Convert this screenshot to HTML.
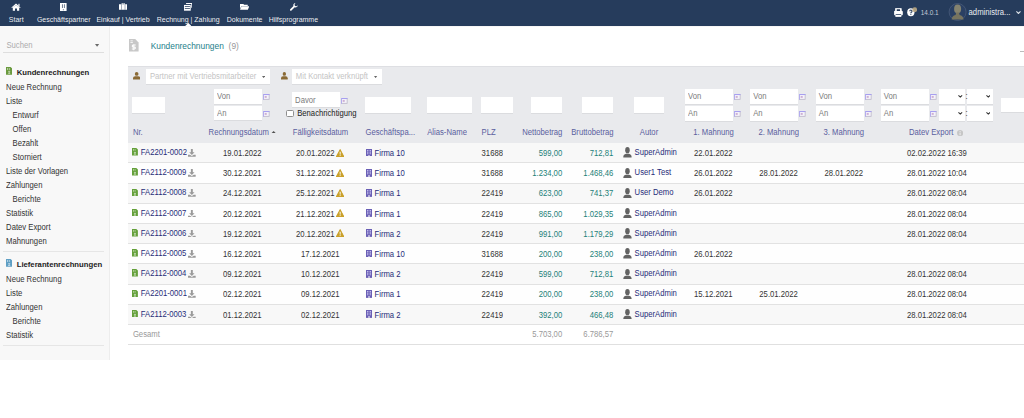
<!DOCTYPE html>
<html><head><meta charset="utf-8"><title>Kundenrechnungen</title>
<style>
html,body{margin:0;padding:0;}
body{width:1024px;height:418px;overflow:hidden;position:relative;background:#fff;font-family:"Liberation Sans",sans-serif;font-size:7.7px;color:#333;}
.t{position:absolute;line-height:0;white-space:nowrap;}
.r{position:absolute;display:block;}
</style></head><body>
<div class="r" style="left:0.00px;top:0.00px;width:1024.00px;height:26.00px;background:#263c5c"></div>
<div class="r" style="left:109.00px;top:26.00px;width:915.00px;height:1.00px;background:rgba(0,0,0,0.035)"></div>
<div class="t" style="left:-133.75px;width:300px;text-align:center;top:20.37px;font-size:7px;color:rgba(255,255,255,0.93);transform:scaleY(1.12);transform-origin:0 2.43px;">Start</div>
<div class="t" style="left:-86.25px;width:300px;text-align:center;top:20.37px;font-size:7px;color:rgba(255,255,255,0.93);transform:scaleY(1.12);transform-origin:0 2.43px;">Geschäftspartner</div>
<div class="t" style="left:-27.00px;width:300px;text-align:center;top:20.37px;font-size:7px;color:rgba(255,255,255,0.93);transform:scaleY(1.12);transform-origin:0 2.43px;">Einkauf | Vertrieb</div>
<div class="t" style="left:38.20px;width:300px;text-align:center;top:20.37px;font-size:7px;color:rgba(255,255,255,0.93);transform:scaleY(1.12);transform-origin:0 2.43px;">Rechnung | Zahlung</div>
<div class="t" style="left:94.60px;width:300px;text-align:center;top:20.37px;font-size:7px;color:rgba(255,255,255,0.93);transform:scaleY(1.12);transform-origin:0 2.43px;">Dokumente</div>
<div class="t" style="left:143.40px;width:300px;text-align:center;top:20.37px;font-size:7px;color:rgba(255,255,255,0.93);transform:scaleY(1.12);transform-origin:0 2.43px;">Hilfsprogramme</div>
<svg class="r" style="left:11.00px;top:2.50px;width:10.00px;height:8.00px;" viewBox="0 0 10 8" preserveAspectRatio="none"><path fill="#fff" d="M5 0.6 L9.6 4.4 L9 5.1 L5 1.9 L1 5.1 L0.4 4.4 Z M1.8 4.6 L5 2.2 L8.2 4.6 V7.8 H6 V5.6 H4 V7.8 H1.8 Z"/><rect fill="#fff" x="7.4" y="0.8" width="1.1" height="2.2"/></svg>
<svg class="r" style="left:60.30px;top:2.70px;width:6.60px;height:8.20px;" viewBox="0 0 7 8" preserveAspectRatio="none"><path fill="#fff" d="M0 0 H7 V8 H0 Z"/><path fill="#263c5c" d="M2.1 1.3 H2.8 V4.8 H2.1 Z M4.2 1.3 H4.9 V4.8 H4.2 Z M3.1 6 H3.9 V7 H3.1 Z"/></svg>
<svg class="r" style="left:119.00px;top:3.40px;width:8.30px;height:6.80px;" viewBox="0 0 8 7" preserveAspectRatio="none"><path fill="#fff" d="M2.6 0 H5.4 V1.3 H8 V7 H0 V1.3 H2.6 Z"/><path fill="#263c5c" d="M3.2 0.5 H4.8 V1.3 H3.2 Z M2 1.3 H2.4 V7 H2 Z M5.6 1.3 H6 V7 H5.6 Z"/></svg>
<svg class="r" style="left:183.90px;top:3.20px;width:8.30px;height:7.70px;" viewBox="0 0 8 8" preserveAspectRatio="none"><path fill="#fff" d="M2 0 H8 V5 H7 V1 H2 Z"/><path fill="#fff" d="M0 2 H6.5 V8 H0 Z"/><path fill="#263c5c" d="M0.8 3.5 H5.7 V4.1 H0.8 Z M0.8 5.3 H5.7 V5.9 H0.8 Z"/></svg>
<svg class="r" style="left:240.00px;top:3.90px;width:9.30px;height:5.80px;" viewBox="0 0 9 6" preserveAspectRatio="none"><path fill="#fff" d="M0 0 H3.2 L4 0.8 H7.5 V2 H1.5 L0 5 Z M1.6 2.4 H9 L7.6 6 H0 Z"/></svg>
<svg class="r" style="left:289.70px;top:3.20px;width:7.90px;height:7.70px;" viewBox="0 0 8 8" preserveAspectRatio="none"><path fill="#fff" d="M5.6 0 A2.4 2.4 0 0 0 3.5 3.2 L0.2 6.5 A0.9 0.9 0 0 0 1.5 7.8 L4.8 4.5 A2.4 2.4 0 0 0 8 2.4 L6.8 3.4 L5 3 L4.6 1.2 L5.6 0 Z"/></svg>
<svg class="r" style="left:184.80px;top:23.00px;width:6.70px;height:3.20px;" viewBox="0 0 6 3" preserveAspectRatio="none"><path fill="#fff" d="M3 0 L6 3 H0 Z"/></svg>
<svg class="r" style="left:894.00px;top:7.80px;width:8.80px;height:9.00px;" viewBox="0 0 9 9" preserveAspectRatio="none"><path fill="#fff" stroke="#fff" stroke-width="0.8" stroke-linejoin="round" d="M1.6 0.4 H7.4 V2.8 Q8.6 2.8 8.6 4 V6.8 H7.2 V8.6 H1.8 V6.8 H0.4 V4 Q0.4 2.8 1.6 2.8 Z"/><path fill="#263c5c" d="M2.8 1.2 H6.2 V2.9 H2.8 Z M1.8 5.9 H7.2 V6.8 H1.8 Z"/></svg>
<svg class="r" style="left:906.90px;top:8.30px;width:7.70px;height:8.40px;" viewBox="0 0 8 8" preserveAspectRatio="none"><circle cx="4" cy="4" r="3.8" fill="#fff"/><path fill="none" stroke="#263c5c" stroke-width="1.1" d="M2.9 3.1 A1.15 1.15 0 1 1 4.3 4.2 Q4 4.4 4 5"/><rect fill="#263c5c" x="3.5" y="5.6" width="1" height="1"/></svg>
<svg class="r" style="left:911.60px;top:6.80px;width:5.40px;height:5.40px;" viewBox="0 0 6 6" preserveAspectRatio="none"><circle cx="3" cy="3" r="2.7" fill="#bba984" fill-opacity="0.9"/></svg>
<div class="t" style="left:920.80px;top:12.98px;font-size:6.4px;color:#c2cad6;transform:scaleY(1.12);transform-origin:0 2.22px;">14.0.1</div>
<svg class="r" style="left:944.00px;top:0.00px;width:28.00px;height:24.00px;" viewBox="0 0 28 24" preserveAspectRatio="none"><circle cx="13.6" cy="12" r="8.5" fill="#2a4063" stroke="#4d5f7e" stroke-width="0.7"/><ellipse cx="13.6" cy="8.9" rx="3.5" ry="4.3" fill="#85836f"/><path fill="#77745f" d="M7.6 19.6 Q8 15.6 11.6 15 L12.2 12.6 H15 L15.6 15 Q19.2 15.6 19.6 19.6 Z"/></svg>
<div class="t" style="left:968.60px;top:13.03px;color:#e9edf2;transform:scaleY(1.12);transform-origin:0 2.67px;">administra...</div>
<svg class="r" style="left:1015.70px;top:11.00px;width:4.90px;height:3.00px;" viewBox="0 0 5 3" preserveAspectRatio="none"><path fill="none" stroke="#dfe4ea" stroke-width="1.1" d="M0.4 0.4 L2.5 2.5 L4.6 0.4"/></svg>
<div class="r" style="left:0.00px;top:26.00px;width:109.00px;height:334.00px;background:#f8f8f8;border-right:1px solid #ededed"></div>
<div class="t" style="left:6.40px;top:46.43px;color:#acacac;transform:scaleY(1.12);transform-origin:0 2.67px;">Suchen</div>
<svg class="r" style="left:95.40px;top:44.30px;width:4.20px;height:2.80px;" viewBox="0 0 4 3" preserveAspectRatio="none"><path fill="#6a6a6a" d="M0 0 H4 L2 3 Z"/></svg>
<div class="r" style="left:2.70px;top:52.00px;width:100.90px;height:1.00px;background:#dedede"></div>
<svg class="r" style="left:5.70px;top:67.40px;width:6.30px;height:7.70px;" viewBox="0 0 6 8" preserveAspectRatio="none"><path fill="#6a9a3e" d="M0 0 H4.4 L6 1.6 V8 H0 Z"/><path fill="#fff" fill-opacity="0.6" d="M1.1 1.0 H1.9 V3.0 H1.1 Z M2.7 1.0 H3.5 V3.0 H2.7 Z M2.5 4.0 H3.5 V7.3 H2.5 Z M1.9 4.6 H4.1 V5.2 H1.9 Z M1.9 6.2 H4.1 V6.8 H1.9Z"/></svg>
<div class="t" style="left:16.70px;top:73.23px;color:#222;font-weight:bold;transform:scaleY(1.02);transform-origin:0 2.67px;">Kundenrechnungen</div>
<div class="t" style="left:6.10px;top:88.13px;color:#333;transform:scaleY(1.12);transform-origin:0 2.67px;">Neue Rechnung</div>
<div class="t" style="left:6.10px;top:102.13px;color:#333;transform:scaleY(1.12);transform-origin:0 2.67px;">Liste</div>
<div class="t" style="left:12.60px;top:116.13px;color:#333;transform:scaleY(1.12);transform-origin:0 2.67px;">Entwurf</div>
<div class="t" style="left:12.60px;top:130.13px;color:#333;transform:scaleY(1.12);transform-origin:0 2.67px;">Offen</div>
<div class="t" style="left:12.60px;top:144.13px;color:#333;transform:scaleY(1.12);transform-origin:0 2.67px;">Bezahlt</div>
<div class="t" style="left:12.60px;top:158.13px;color:#333;transform:scaleY(1.12);transform-origin:0 2.67px;">Storniert</div>
<div class="t" style="left:6.10px;top:172.13px;color:#333;transform:scaleY(1.12);transform-origin:0 2.67px;">Liste der Vorlagen</div>
<div class="t" style="left:6.10px;top:186.13px;color:#333;transform:scaleY(1.12);transform-origin:0 2.67px;">Zahlungen</div>
<div class="t" style="left:12.60px;top:200.13px;color:#333;transform:scaleY(1.12);transform-origin:0 2.67px;">Berichte</div>
<div class="t" style="left:6.10px;top:214.13px;color:#333;transform:scaleY(1.12);transform-origin:0 2.67px;">Statistik</div>
<div class="t" style="left:6.10px;top:228.13px;color:#333;transform:scaleY(1.12);transform-origin:0 2.67px;">Datev Export</div>
<div class="t" style="left:6.10px;top:242.13px;color:#333;transform:scaleY(1.12);transform-origin:0 2.67px;">Mahnungen</div>
<div class="r" style="left:2.70px;top:251.00px;width:100.90px;height:1.00px;background:#e6e6e6"></div>
<svg class="r" style="left:5.70px;top:259.20px;width:6.30px;height:7.80px;" viewBox="0 0 6 8" preserveAspectRatio="none"><path fill="#5f9fc4" d="M0 0 H4.4 L6 1.6 V8 H0 Z"/><path fill="#fff" fill-opacity="0.6" d="M1.1 1.0 H1.9 V3.0 H1.1 Z M2.7 1.0 H3.5 V3.0 H2.7 Z M2.5 4.0 H3.5 V7.3 H2.5 Z M1.9 4.6 H4.1 V5.2 H1.9 Z M1.9 6.2 H4.1 V6.8 H1.9Z"/></svg>
<div class="t" style="left:16.70px;top:265.13px;color:#222;font-weight:bold;transform:scaleY(1.02);transform-origin:0 2.67px;">Lieferantenrechnungen</div>
<div class="t" style="left:6.10px;top:280.33px;color:#333;transform:scaleY(1.12);transform-origin:0 2.67px;">Neue Rechnung</div>
<div class="t" style="left:6.10px;top:294.33px;color:#333;transform:scaleY(1.12);transform-origin:0 2.67px;">Liste</div>
<div class="t" style="left:6.10px;top:308.33px;color:#333;transform:scaleY(1.12);transform-origin:0 2.67px;">Zahlungen</div>
<div class="t" style="left:12.60px;top:322.33px;color:#333;transform:scaleY(1.12);transform-origin:0 2.67px;">Berichte</div>
<div class="t" style="left:6.10px;top:336.33px;color:#333;transform:scaleY(1.12);transform-origin:0 2.67px;">Statistik</div>
<div class="r" style="left:2.70px;top:345.00px;width:100.90px;height:1.00px;background:#e6e6e6"></div>
<svg class="r" style="left:129.00px;top:39.00px;width:9.60px;height:12.60px;" viewBox="0 0 10 13" preserveAspectRatio="none"><path fill="#c8c8c8" d="M0 0 H6.5 L10 3.5 V13 H0 Z"/><path fill="#fff" d="M1.5 1.5 H4 V2.4 H1.5 Z M1.5 3.3 H4 V4.2 H1.5 Z M4.5 5.5 H5.5 V11.5 H4.5 Z M3 6.8 A1.4 1.2 0 0 1 4.4 5.8 H7 V6.8 H4.4 A0.4 0.4 0 0 0 4.4 7.8 H5.6 A1.6 1.5 0 0 1 5.6 10.8 H3 V9.8 H5.6 A0.5 0.5 0 0 0 5.6 8.8 H4.4 A1.4 1.4 0 0 1 3 6.8Z"/></svg>
<div class="t" style="left:150.70px;top:46.29px;font-size:8.4px;color:rgb(30,126,138);transform:scaleY(1.18);transform-origin:0 2.91px;">Kundenrechnungen</div>
<div class="t" style="left:228.60px;top:46.29px;font-size:8.4px;color:#999;transform:scaleY(1.18);transform-origin:0 2.91px;">(9)</div>
<div class="r" style="left:1020.00px;top:50.80px;width:4.00px;height:1.00px;background:#bbb"></div>
<div class="r" style="left:128.30px;top:66.00px;width:895.70px;height:76.60px;background:rgb(233,234,237)"></div>
<div class="r" style="left:128.30px;top:66.00px;width:895.70px;height:1.00px;background:rgb(222,223,227)"></div>
<svg class="r" style="left:132.60px;top:72.30px;width:7.30px;height:7.60px;" viewBox="0 0 8 8" preserveAspectRatio="none"><circle cx="4" cy="2" r="2" fill="#8a6a35"/><path fill="#8a6a35" d="M0 8 V6.6 Q0 4.6 2.4 4.6 H5.6 Q8 4.6 8 6.6 V8 Z"/></svg>
<div class="r" style="left:145.70px;top:69.00px;width:124.00px;height:15.00px;background:#fff;box-shadow:0 1px 0 rgba(0,0,0,0.06)"></div>
<div class="t" style="left:149.90px;top:77.43px;color:#c4c4c4;transform:scaleY(1.12);transform-origin:0 2.67px;">Partner mit Vertriebsmitarbeiter</div>
<svg class="r" style="left:262.20px;top:75.50px;width:3.20px;height:2.10px;" viewBox="0 0 4 3" preserveAspectRatio="none"><path fill="#666" d="M0 0 H4 L2 3 Z"/></svg>
<svg class="r" style="left:281.40px;top:72.30px;width:6.70px;height:7.60px;" viewBox="0 0 8 8" preserveAspectRatio="none"><circle cx="4" cy="2" r="2" fill="#8a6a35"/><path fill="#8a6a35" d="M0 8 V6.6 Q0 4.6 2.4 4.6 H5.6 Q8 4.6 8 6.6 V8 Z"/></svg>
<div class="r" style="left:292.30px;top:69.00px;width:89.60px;height:15.00px;background:#fff;box-shadow:0 1px 0 rgba(0,0,0,0.06)"></div>
<div class="t" style="left:295.80px;top:77.43px;color:#c4c4c4;transform:scaleY(1.12);transform-origin:0 2.67px;">Mit Kontakt verknüpft</div>
<svg class="r" style="left:374.40px;top:75.50px;width:3.20px;height:2.10px;" viewBox="0 0 4 3" preserveAspectRatio="none"><path fill="#666" d="M0 0 H4 L2 3 Z"/></svg>
<div class="r" style="left:132.20px;top:96.90px;width:32.60px;height:15.80px;background:#fff;box-shadow:0 1px 0 rgba(0,0,0,0.06)"></div>
<div class="r" style="left:214.10px;top:88.80px;width:47.90px;height:15.30px;background:#fff;box-shadow:0 1px 0 rgba(0,0,0,0.06)"></div>
<div class="t" style="left:217.00px;top:97.03px;color:#7c7c7c;transform:scaleY(1.12);transform-origin:0 2.67px;">Von</div>
<div class="r" style="left:214.10px;top:105.80px;width:47.90px;height:14.60px;background:#fff;box-shadow:0 1px 0 rgba(0,0,0,0.06)"></div>
<div class="t" style="left:217.00px;top:113.83px;color:#7c7c7c;transform:scaleY(1.12);transform-origin:0 2.67px;">An</div>
<svg class="r" style="left:263.20px;top:94.00px;width:6.50px;height:5.70px;" viewBox="0 0 7 6" preserveAspectRatio="none"><rect x="0.4" y="0.4" width="6.2" height="5.2" fill="#f5f3fa" stroke="#b7b3c6" stroke-width="0.8"/><rect x="0" y="0" width="7" height="1.1" fill="#a79ff0"/><rect x="0" y="0" width="1" height="6" fill="#b2aaf0"/><rect x="1.8" y="2.2" width="2.2" height="1.8" fill="#c9a9d0"/></svg>
<svg class="r" style="left:263.20px;top:111.30px;width:6.50px;height:5.70px;" viewBox="0 0 7 6" preserveAspectRatio="none"><rect x="0.4" y="0.4" width="6.2" height="5.2" fill="#f5f3fa" stroke="#b7b3c6" stroke-width="0.8"/><rect x="0" y="0" width="7" height="1.1" fill="#a79ff0"/><rect x="0" y="0" width="1" height="6" fill="#b2aaf0"/><rect x="1.8" y="2.2" width="2.2" height="1.8" fill="#c9a9d0"/></svg>
<div class="r" style="left:292.00px;top:92.40px;width:47.80px;height:15.00px;background:#fff;box-shadow:0 1px 0 rgba(0,0,0,0.06)"></div>
<div class="t" style="left:295.10px;top:100.93px;color:#7c7c7c;transform:scaleY(1.12);transform-origin:0 2.67px;">Davor</div>
<svg class="r" style="left:341.20px;top:97.90px;width:6.50px;height:5.70px;" viewBox="0 0 7 6" preserveAspectRatio="none"><rect x="0.4" y="0.4" width="6.2" height="5.2" fill="#f5f3fa" stroke="#b7b3c6" stroke-width="0.8"/><rect x="0" y="0" width="7" height="1.1" fill="#a79ff0"/><rect x="0" y="0" width="1" height="6" fill="#b2aaf0"/><rect x="1.8" y="2.2" width="2.2" height="1.8" fill="#c9a9d0"/></svg>
<div class="r" style="left:286.10px;top:110.10px;width:7.50px;height:7.30px;background:#fff;border:0.9px solid #8f8f8f;border-radius:1.5px;box-sizing:border-box"></div>
<div class="t" style="left:297.20px;top:114.33px;color:#222;transform:scaleY(1.12);transform-origin:0 2.67px;">Benachrichtigung</div>
<div class="r" style="left:365.00px;top:97.20px;width:45.80px;height:15.60px;background:#fff;box-shadow:0 1px 0 rgba(0,0,0,0.06)"></div>
<div class="r" style="left:427.20px;top:97.20px;width:45.30px;height:15.60px;background:#fff;box-shadow:0 1px 0 rgba(0,0,0,0.06)"></div>
<div class="r" style="left:481.10px;top:97.20px;width:32.00px;height:15.60px;background:#fff;box-shadow:0 1px 0 rgba(0,0,0,0.06)"></div>
<div class="r" style="left:531.00px;top:97.20px;width:30.90px;height:15.60px;background:#fff;box-shadow:0 1px 0 rgba(0,0,0,0.06)"></div>
<div class="r" style="left:582.20px;top:97.20px;width:31.10px;height:15.60px;background:#fff;box-shadow:0 1px 0 rgba(0,0,0,0.06)"></div>
<div class="r" style="left:633.60px;top:97.20px;width:30.90px;height:15.60px;background:#fff;box-shadow:0 1px 0 rgba(0,0,0,0.06)"></div>
<div class="r" style="left:1001.20px;top:98.20px;width:28.80px;height:13.80px;background:#fff;box-shadow:0 1px 0 rgba(0,0,0,0.06)"></div>
<div class="r" style="left:685.00px;top:89.00px;width:48.00px;height:15.00px;background:#fff;box-shadow:0 1px 0 rgba(0,0,0,0.06)"></div>
<div class="t" style="left:688.00px;top:97.03px;color:#7c7c7c;transform:scaleY(1.12);transform-origin:0 2.67px;">Von</div>
<div class="r" style="left:685.00px;top:105.90px;width:48.00px;height:15.00px;background:#fff;box-shadow:0 1px 0 rgba(0,0,0,0.06)"></div>
<div class="t" style="left:688.00px;top:113.83px;color:#7c7c7c;transform:scaleY(1.12);transform-origin:0 2.67px;">An</div>
<svg class="r" style="left:734.20px;top:94.20px;width:6.50px;height:5.70px;" viewBox="0 0 7 6" preserveAspectRatio="none"><rect x="0.4" y="0.4" width="6.2" height="5.2" fill="#f5f3fa" stroke="#b7b3c6" stroke-width="0.8"/><rect x="0" y="0" width="7" height="1.1" fill="#a79ff0"/><rect x="0" y="0" width="1" height="6" fill="#b2aaf0"/><rect x="1.8" y="2.2" width="2.2" height="1.8" fill="#c9a9d0"/></svg>
<svg class="r" style="left:734.20px;top:111.00px;width:6.50px;height:5.70px;" viewBox="0 0 7 6" preserveAspectRatio="none"><rect x="0.4" y="0.4" width="6.2" height="5.2" fill="#f5f3fa" stroke="#b7b3c6" stroke-width="0.8"/><rect x="0" y="0" width="7" height="1.1" fill="#a79ff0"/><rect x="0" y="0" width="1" height="6" fill="#b2aaf0"/><rect x="1.8" y="2.2" width="2.2" height="1.8" fill="#c9a9d0"/></svg>
<div class="r" style="left:750.20px;top:89.00px;width:48.00px;height:15.00px;background:#fff;box-shadow:0 1px 0 rgba(0,0,0,0.06)"></div>
<div class="t" style="left:753.20px;top:97.03px;color:#7c7c7c;transform:scaleY(1.12);transform-origin:0 2.67px;">Von</div>
<div class="r" style="left:750.20px;top:105.90px;width:48.00px;height:15.00px;background:#fff;box-shadow:0 1px 0 rgba(0,0,0,0.06)"></div>
<div class="t" style="left:753.20px;top:113.83px;color:#7c7c7c;transform:scaleY(1.12);transform-origin:0 2.67px;">An</div>
<svg class="r" style="left:799.40px;top:94.20px;width:6.50px;height:5.70px;" viewBox="0 0 7 6" preserveAspectRatio="none"><rect x="0.4" y="0.4" width="6.2" height="5.2" fill="#f5f3fa" stroke="#b7b3c6" stroke-width="0.8"/><rect x="0" y="0" width="7" height="1.1" fill="#a79ff0"/><rect x="0" y="0" width="1" height="6" fill="#b2aaf0"/><rect x="1.8" y="2.2" width="2.2" height="1.8" fill="#c9a9d0"/></svg>
<svg class="r" style="left:799.40px;top:111.00px;width:6.50px;height:5.70px;" viewBox="0 0 7 6" preserveAspectRatio="none"><rect x="0.4" y="0.4" width="6.2" height="5.2" fill="#f5f3fa" stroke="#b7b3c6" stroke-width="0.8"/><rect x="0" y="0" width="7" height="1.1" fill="#a79ff0"/><rect x="0" y="0" width="1" height="6" fill="#b2aaf0"/><rect x="1.8" y="2.2" width="2.2" height="1.8" fill="#c9a9d0"/></svg>
<div class="r" style="left:815.80px;top:89.00px;width:48.00px;height:15.00px;background:#fff;box-shadow:0 1px 0 rgba(0,0,0,0.06)"></div>
<div class="t" style="left:818.80px;top:97.03px;color:#7c7c7c;transform:scaleY(1.12);transform-origin:0 2.67px;">Von</div>
<div class="r" style="left:815.80px;top:105.90px;width:48.00px;height:15.00px;background:#fff;box-shadow:0 1px 0 rgba(0,0,0,0.06)"></div>
<div class="t" style="left:818.80px;top:113.83px;color:#7c7c7c;transform:scaleY(1.12);transform-origin:0 2.67px;">An</div>
<svg class="r" style="left:865.00px;top:94.20px;width:6.50px;height:5.70px;" viewBox="0 0 7 6" preserveAspectRatio="none"><rect x="0.4" y="0.4" width="6.2" height="5.2" fill="#f5f3fa" stroke="#b7b3c6" stroke-width="0.8"/><rect x="0" y="0" width="7" height="1.1" fill="#a79ff0"/><rect x="0" y="0" width="1" height="6" fill="#b2aaf0"/><rect x="1.8" y="2.2" width="2.2" height="1.8" fill="#c9a9d0"/></svg>
<svg class="r" style="left:865.00px;top:111.00px;width:6.50px;height:5.70px;" viewBox="0 0 7 6" preserveAspectRatio="none"><rect x="0.4" y="0.4" width="6.2" height="5.2" fill="#f5f3fa" stroke="#b7b3c6" stroke-width="0.8"/><rect x="0" y="0" width="7" height="1.1" fill="#a79ff0"/><rect x="0" y="0" width="1" height="6" fill="#b2aaf0"/><rect x="1.8" y="2.2" width="2.2" height="1.8" fill="#c9a9d0"/></svg>
<div class="r" style="left:880.80px;top:89.00px;width:48.00px;height:15.00px;background:#fff;box-shadow:0 1px 0 rgba(0,0,0,0.06)"></div>
<div class="t" style="left:883.80px;top:97.03px;color:#7c7c7c;transform:scaleY(1.12);transform-origin:0 2.67px;">Von</div>
<div class="r" style="left:880.80px;top:105.90px;width:48.00px;height:15.00px;background:#fff;box-shadow:0 1px 0 rgba(0,0,0,0.06)"></div>
<div class="t" style="left:883.80px;top:113.83px;color:#7c7c7c;transform:scaleY(1.12);transform-origin:0 2.67px;">An</div>
<svg class="r" style="left:930.00px;top:94.20px;width:6.50px;height:5.70px;" viewBox="0 0 7 6" preserveAspectRatio="none"><rect x="0.4" y="0.4" width="6.2" height="5.2" fill="#f5f3fa" stroke="#b7b3c6" stroke-width="0.8"/><rect x="0" y="0" width="7" height="1.1" fill="#a79ff0"/><rect x="0" y="0" width="1" height="6" fill="#b2aaf0"/><rect x="1.8" y="2.2" width="2.2" height="1.8" fill="#c9a9d0"/></svg>
<svg class="r" style="left:930.00px;top:111.00px;width:6.50px;height:5.70px;" viewBox="0 0 7 6" preserveAspectRatio="none"><rect x="0.4" y="0.4" width="6.2" height="5.2" fill="#f5f3fa" stroke="#b7b3c6" stroke-width="0.8"/><rect x="0" y="0" width="7" height="1.1" fill="#a79ff0"/><rect x="0" y="0" width="1" height="6" fill="#b2aaf0"/><rect x="1.8" y="2.2" width="2.2" height="1.8" fill="#c9a9d0"/></svg>
<div class="r" style="left:939.30px;top:89.10px;width:25.40px;height:14.70px;background:#fff;box-shadow:0 1px 0 rgba(0,0,0,0.06)"></div>
<div class="r" style="left:967.20px;top:89.10px;width:25.90px;height:14.70px;background:#fff;box-shadow:0 1px 0 rgba(0,0,0,0.06)"></div>
<svg class="r" style="left:958.30px;top:95.15px;width:4.60px;height:2.60px;" viewBox="0 0 5 3" preserveAspectRatio="none"><path fill="none" stroke="#333" stroke-width="1.2" d="M0.5 0.5 L2.5 2.4 L4.5 0.5"/></svg>
<svg class="r" style="left:985.90px;top:95.15px;width:4.60px;height:2.60px;" viewBox="0 0 5 3" preserveAspectRatio="none"><path fill="none" stroke="#333" stroke-width="1.2" d="M0.5 0.5 L2.5 2.4 L4.5 0.5"/></svg>
<div class="t" style="left:965.60px;top:97.28px;color:#444;transform:scaleY(1.12);transform-origin:0 2.67px;">:</div>
<div class="r" style="left:939.30px;top:105.80px;width:25.40px;height:15.00px;background:#fff;box-shadow:0 1px 0 rgba(0,0,0,0.06)"></div>
<div class="r" style="left:967.20px;top:105.80px;width:25.90px;height:15.00px;background:#fff;box-shadow:0 1px 0 rgba(0,0,0,0.06)"></div>
<svg class="r" style="left:958.30px;top:112.00px;width:4.60px;height:2.60px;" viewBox="0 0 5 3" preserveAspectRatio="none"><path fill="none" stroke="#333" stroke-width="1.2" d="M0.5 0.5 L2.5 2.4 L4.5 0.5"/></svg>
<svg class="r" style="left:985.90px;top:112.00px;width:4.60px;height:2.60px;" viewBox="0 0 5 3" preserveAspectRatio="none"><path fill="none" stroke="#333" stroke-width="1.2" d="M0.5 0.5 L2.5 2.4 L4.5 0.5"/></svg>
<div class="t" style="left:965.60px;top:114.13px;color:#444;transform:scaleY(1.12);transform-origin:0 2.67px;">:</div>
<div class="t" style="left:132.90px;top:133.03px;color:rgb(90,96,158);transform:scaleY(1.12);transform-origin:0 2.67px;">Nr.</div>
<div class="t" style="left:208.60px;top:133.03px;color:rgb(90,96,158);transform:scaleY(1.12);transform-origin:0 2.67px;">Rechnungsdatum</div>
<svg class="r" style="left:270.80px;top:130.60px;width:5.20px;height:2.60px;" viewBox="0 0 5 3" preserveAspectRatio="none"><path fill="#505050" d="M2.5 0 L5 3 H0 Z"/></svg>
<div class="t" style="left:170.50px;width:300px;text-align:center;top:133.03px;color:rgb(90,96,158);transform:scaleY(1.12);transform-origin:0 2.67px;">Fälligkeitsdatum</div>
<div class="t" style="left:365.50px;top:133.03px;color:rgb(90,96,158);transform:scaleY(1.12);transform-origin:0 2.67px;">Geschäftspa...</div>
<div class="t" style="left:427.20px;top:133.03px;color:rgb(90,96,158);transform:scaleY(1.12);transform-origin:0 2.67px;">Alias-Name</div>
<div class="t" style="left:481.60px;top:133.03px;color:rgb(90,96,158);transform:scaleY(1.12);transform-origin:0 2.67px;">PLZ</div>
<div class="t" style="left:262.40px;width:300px;text-align:right;top:133.03px;color:rgb(90,96,158);transform:scaleY(1.12);transform-origin:0 2.67px;">Nettobetrag</div>
<div class="t" style="left:313.50px;width:300px;text-align:right;top:133.03px;color:rgb(90,96,158);transform:scaleY(1.12);transform-origin:0 2.67px;">Bruttobetrag</div>
<div class="t" style="left:499.00px;width:300px;text-align:center;top:133.03px;color:rgb(90,96,158);transform:scaleY(1.12);transform-origin:0 2.67px;">Autor</div>
<div class="t" style="left:563.60px;width:300px;text-align:center;top:133.03px;color:rgb(90,96,158);transform:scaleY(1.12);transform-origin:0 2.67px;">1. Mahnung</div>
<div class="t" style="left:628.70px;width:300px;text-align:center;top:133.03px;color:rgb(90,96,158);transform:scaleY(1.12);transform-origin:0 2.67px;">2. Mahnung</div>
<div class="t" style="left:693.80px;width:300px;text-align:center;top:133.03px;color:rgb(90,96,158);transform:scaleY(1.12);transform-origin:0 2.67px;">3. Mahnung</div>
<div class="t" style="left:909.00px;top:133.03px;color:rgb(90,96,158);transform:scaleY(1.12);transform-origin:0 2.67px;">Datev Export</div>
<svg class="r" style="left:957.00px;top:130.20px;width:6.20px;height:6.20px;" viewBox="0 0 6 6" preserveAspectRatio="none"><circle cx="3" cy="3" r="3" fill="#c6c6c6"/><rect x="2.5" y="2.5" width="1" height="2.5" fill="#eee"/><rect x="2.5" y="1" width="1" height="0.9" fill="#eee"/></svg>
<div class="r" style="left:128.30px;top:143.00px;width:895.70px;height:19.00px;background:#f8f8f8"></div>
<div class="r" style="left:128.30px;top:162.00px;width:895.70px;height:1.00px;background:#e2e2e2"></div>
<svg class="r" style="left:132.40px;top:148.25px;width:5.90px;height:7.50px;" viewBox="0 0 6 8" preserveAspectRatio="none"><path fill="#64a03a" d="M0 0 H4.4 L6 1.6 V8 H0 Z"/><path fill="#fff" fill-opacity="0.6" d="M1.1 1.0 H1.9 V3.0 H1.1 Z M2.7 1.0 H3.5 V3.0 H2.7 Z M2.5 4.0 H3.5 V7.3 H2.5 Z M1.9 4.6 H4.1 V5.2 H1.9 Z M1.9 6.2 H4.1 V6.8 H1.9Z"/></svg>
<div class="t" style="left:140.75px;top:152.83px;color:rgb(38,44,120);transform:scaleY(1.12);transform-origin:0 2.67px;">FA2201-0002</div>
<svg class="r" style="left:188.00px;top:149.00px;width:7.70px;height:7.70px;" viewBox="0 0 8 8" preserveAspectRatio="none"><path fill="#9a9a9a" d="M3 0 H5 V3.5 H6.8 L4 6.3 L1.2 3.5 H3 Z M0 6 H2 L4 7.2 L6 6 H8 V8 H0 Z"/></svg>
<div class="t" style="left:92.30px;width:300px;text-align:center;top:153.83px;color:#333;transform:scaleY(1.12);transform-origin:0 2.67px;">19.01.2022</div>
<div class="t" style="left:296.10px;top:153.83px;color:#333;transform:scaleY(1.12);transform-origin:0 2.67px;">20.01.2022</div>
<svg class="r" style="left:336.10px;top:148.60px;width:8.30px;height:8.10px;" viewBox="0 0 8 8" preserveAspectRatio="none"><path fill="#c9a02a" stroke="#c9a02a" stroke-width="1" stroke-linejoin="round" d="M4 0.6 L7.5 7.5 H0.5 Z"/><path fill="#fff" d="M3.5 2.8 H4.5 L4.35 5.6 H3.65 Z"/><rect x="3.55" y="6.1" width="0.9" height="0.9" fill="#fff"/></svg>
<svg class="r" style="left:365.70px;top:148.60px;width:6.00px;height:7.90px;" viewBox="0 0 6 8" preserveAspectRatio="none"><path fill="#6a5fb5" d="M0 0 H6 V8 H0 Z"/><path fill="#c9c4f0" d="M1.1 0.9 H2.4 V5.4 H1.1 Z M3.6 0.9 H4.9 V5.4 H3.6 Z"/><path fill="#6a5fb5" d="M1 2.3 H5 V2.8 H1 Z M1 3.8 H5 V4.3 H1 Z"/><path fill="#fff" d="M2.5 6.1 H3.5 V8 H2.5 Z"/></svg>
<div class="t" style="left:374.50px;top:153.83px;color:rgb(38,44,120);transform:scaleY(1.12);transform-origin:0 2.67px;">Firma 10</div>
<div class="t" style="left:481.60px;top:153.83px;color:#333;transform:scaleY(1.12);transform-origin:0 2.67px;">31688</div>
<div class="t" style="left:262.20px;width:300px;text-align:right;top:153.83px;color:rgb(34,128,120);transform:scaleY(1.12);transform-origin:0 2.67px;">599,00</div>
<div class="t" style="left:313.30px;width:300px;text-align:right;top:153.83px;color:rgb(34,128,120);transform:scaleY(1.12);transform-origin:0 2.67px;">712,81</div>
<svg class="r" style="left:622.90px;top:147.30px;width:8.90px;height:10.50px;" viewBox="0 0 9 10.5" preserveAspectRatio="none"><ellipse cx="4.5" cy="3.2" rx="2.3" ry="3.1" fill="#636363"/><path fill="#636363" d="M0.3 10.5 Q0 7.2 3.2 6.7 H5.8 Q9 7.2 8.7 10.5 Z"/></svg>
<div class="t" style="left:634.60px;top:153.03px;color:rgb(38,44,120);transform:scaleY(1.12);transform-origin:0 2.67px;">SuperAdmin</div>
<div class="t" style="left:563.30px;width:300px;text-align:center;top:153.83px;color:#333;transform:scaleY(1.12);transform-origin:0 2.67px;">22.01.2022</div>
<div class="t" style="left:786.90px;width:300px;text-align:center;top:153.83px;color:#333;transform:scaleY(1.12);transform-origin:0 2.67px;">02.02.2022 16:39</div>
<div class="r" style="left:128.30px;top:163.00px;width:895.70px;height:20.00px;background:#fefefe"></div>
<div class="r" style="left:128.30px;top:183.00px;width:895.70px;height:1.00px;background:#e2e2e2"></div>
<svg class="r" style="left:132.40px;top:168.45px;width:5.90px;height:7.50px;" viewBox="0 0 6 8" preserveAspectRatio="none"><path fill="#64a03a" d="M0 0 H4.4 L6 1.6 V8 H0 Z"/><path fill="#fff" fill-opacity="0.6" d="M1.1 1.0 H1.9 V3.0 H1.1 Z M2.7 1.0 H3.5 V3.0 H2.7 Z M2.5 4.0 H3.5 V7.3 H2.5 Z M1.9 4.6 H4.1 V5.2 H1.9 Z M1.9 6.2 H4.1 V6.8 H1.9Z"/></svg>
<div class="t" style="left:140.75px;top:172.83px;color:rgb(38,44,120);transform:scaleY(1.12);transform-origin:0 2.67px;">FA2112-0009</div>
<svg class="r" style="left:188.00px;top:169.20px;width:7.70px;height:7.70px;" viewBox="0 0 8 8" preserveAspectRatio="none"><path fill="#9a9a9a" d="M3 0 H5 V3.5 H6.8 L4 6.3 L1.2 3.5 H3 Z M0 6 H2 L4 7.2 L6 6 H8 V8 H0 Z"/></svg>
<div class="t" style="left:92.30px;width:300px;text-align:center;top:173.83px;color:#333;transform:scaleY(1.12);transform-origin:0 2.67px;">30.12.2021</div>
<div class="t" style="left:296.10px;top:173.83px;color:#333;transform:scaleY(1.12);transform-origin:0 2.67px;">31.12.2021</div>
<svg class="r" style="left:336.10px;top:168.80px;width:8.30px;height:8.10px;" viewBox="0 0 8 8" preserveAspectRatio="none"><path fill="#c9a02a" stroke="#c9a02a" stroke-width="1" stroke-linejoin="round" d="M4 0.6 L7.5 7.5 H0.5 Z"/><path fill="#fff" d="M3.5 2.8 H4.5 L4.35 5.6 H3.65 Z"/><rect x="3.55" y="6.1" width="0.9" height="0.9" fill="#fff"/></svg>
<svg class="r" style="left:365.70px;top:168.80px;width:6.00px;height:7.90px;" viewBox="0 0 6 8" preserveAspectRatio="none"><path fill="#6a5fb5" d="M0 0 H6 V8 H0 Z"/><path fill="#c9c4f0" d="M1.1 0.9 H2.4 V5.4 H1.1 Z M3.6 0.9 H4.9 V5.4 H3.6 Z"/><path fill="#6a5fb5" d="M1 2.3 H5 V2.8 H1 Z M1 3.8 H5 V4.3 H1 Z"/><path fill="#fff" d="M2.5 6.1 H3.5 V8 H2.5 Z"/></svg>
<div class="t" style="left:374.50px;top:173.83px;color:rgb(38,44,120);transform:scaleY(1.12);transform-origin:0 2.67px;">Firma 10</div>
<div class="t" style="left:481.60px;top:173.83px;color:#333;transform:scaleY(1.12);transform-origin:0 2.67px;">31688</div>
<div class="t" style="left:262.20px;width:300px;text-align:right;top:173.83px;color:rgb(34,128,120);transform:scaleY(1.12);transform-origin:0 2.67px;">1.234,00</div>
<div class="t" style="left:313.30px;width:300px;text-align:right;top:173.83px;color:rgb(34,128,120);transform:scaleY(1.12);transform-origin:0 2.67px;">1.468,46</div>
<svg class="r" style="left:622.90px;top:167.50px;width:8.90px;height:10.50px;" viewBox="0 0 9 10.5" preserveAspectRatio="none"><ellipse cx="4.5" cy="3.2" rx="2.3" ry="3.1" fill="#636363"/><path fill="#636363" d="M0.3 10.5 Q0 7.2 3.2 6.7 H5.8 Q9 7.2 8.7 10.5 Z"/></svg>
<div class="t" style="left:634.60px;top:173.03px;color:rgb(38,44,120);transform:scaleY(1.12);transform-origin:0 2.67px;">User1 Test</div>
<div class="t" style="left:563.30px;width:300px;text-align:center;top:173.83px;color:#333;transform:scaleY(1.12);transform-origin:0 2.67px;">26.01.2022</div>
<div class="t" style="left:628.60px;width:300px;text-align:center;top:173.83px;color:#333;transform:scaleY(1.12);transform-origin:0 2.67px;">28.01.2022</div>
<div class="t" style="left:693.80px;width:300px;text-align:center;top:173.83px;color:#333;transform:scaleY(1.12);transform-origin:0 2.67px;">28.01.2022</div>
<div class="t" style="left:786.90px;width:300px;text-align:center;top:173.83px;color:#333;transform:scaleY(1.12);transform-origin:0 2.67px;">28.01.2022 10:04</div>
<div class="r" style="left:128.30px;top:184.00px;width:895.70px;height:19.00px;background:#f8f8f8"></div>
<div class="r" style="left:128.30px;top:203.00px;width:895.70px;height:1.00px;background:#e2e2e2"></div>
<svg class="r" style="left:132.40px;top:188.65px;width:5.90px;height:7.50px;" viewBox="0 0 6 8" preserveAspectRatio="none"><path fill="#64a03a" d="M0 0 H4.4 L6 1.6 V8 H0 Z"/><path fill="#fff" fill-opacity="0.6" d="M1.1 1.0 H1.9 V3.0 H1.1 Z M2.7 1.0 H3.5 V3.0 H2.7 Z M2.5 4.0 H3.5 V7.3 H2.5 Z M1.9 4.6 H4.1 V5.2 H1.9 Z M1.9 6.2 H4.1 V6.8 H1.9Z"/></svg>
<div class="t" style="left:140.75px;top:192.83px;color:rgb(38,44,120);transform:scaleY(1.12);transform-origin:0 2.67px;">FA2112-0008</div>
<svg class="r" style="left:188.00px;top:189.40px;width:7.70px;height:7.70px;" viewBox="0 0 8 8" preserveAspectRatio="none"><path fill="#9a9a9a" d="M3 0 H5 V3.5 H6.8 L4 6.3 L1.2 3.5 H3 Z M0 6 H2 L4 7.2 L6 6 H8 V8 H0 Z"/></svg>
<div class="t" style="left:92.30px;width:300px;text-align:center;top:193.83px;color:#333;transform:scaleY(1.12);transform-origin:0 2.67px;">24.12.2021</div>
<div class="t" style="left:296.10px;top:193.83px;color:#333;transform:scaleY(1.12);transform-origin:0 2.67px;">25.12.2021</div>
<svg class="r" style="left:336.10px;top:189.00px;width:8.30px;height:8.10px;" viewBox="0 0 8 8" preserveAspectRatio="none"><path fill="#c9a02a" stroke="#c9a02a" stroke-width="1" stroke-linejoin="round" d="M4 0.6 L7.5 7.5 H0.5 Z"/><path fill="#fff" d="M3.5 2.8 H4.5 L4.35 5.6 H3.65 Z"/><rect x="3.55" y="6.1" width="0.9" height="0.9" fill="#fff"/></svg>
<svg class="r" style="left:365.70px;top:189.00px;width:6.00px;height:7.90px;" viewBox="0 0 6 8" preserveAspectRatio="none"><path fill="#6a5fb5" d="M0 0 H6 V8 H0 Z"/><path fill="#c9c4f0" d="M1.1 0.9 H2.4 V5.4 H1.1 Z M3.6 0.9 H4.9 V5.4 H3.6 Z"/><path fill="#6a5fb5" d="M1 2.3 H5 V2.8 H1 Z M1 3.8 H5 V4.3 H1 Z"/><path fill="#fff" d="M2.5 6.1 H3.5 V8 H2.5 Z"/></svg>
<div class="t" style="left:374.50px;top:193.83px;color:rgb(38,44,120);transform:scaleY(1.12);transform-origin:0 2.67px;">Firma 1</div>
<div class="t" style="left:481.60px;top:193.83px;color:#333;transform:scaleY(1.12);transform-origin:0 2.67px;">22419</div>
<div class="t" style="left:262.20px;width:300px;text-align:right;top:193.83px;color:rgb(34,128,120);transform:scaleY(1.12);transform-origin:0 2.67px;">623,00</div>
<div class="t" style="left:313.30px;width:300px;text-align:right;top:193.83px;color:rgb(34,128,120);transform:scaleY(1.12);transform-origin:0 2.67px;">741,37</div>
<svg class="r" style="left:622.90px;top:187.70px;width:8.90px;height:10.50px;" viewBox="0 0 9 10.5" preserveAspectRatio="none"><ellipse cx="4.5" cy="3.2" rx="2.3" ry="3.1" fill="#636363"/><path fill="#636363" d="M0.3 10.5 Q0 7.2 3.2 6.7 H5.8 Q9 7.2 8.7 10.5 Z"/></svg>
<div class="t" style="left:634.60px;top:193.03px;color:rgb(38,44,120);transform:scaleY(1.12);transform-origin:0 2.67px;">User Demo</div>
<div class="t" style="left:563.30px;width:300px;text-align:center;top:193.83px;color:#333;transform:scaleY(1.12);transform-origin:0 2.67px;">26.01.2022</div>
<div class="t" style="left:786.90px;width:300px;text-align:center;top:193.83px;color:#333;transform:scaleY(1.12);transform-origin:0 2.67px;">28.01.2022 08:04</div>
<div class="r" style="left:128.30px;top:204.00px;width:895.70px;height:19.00px;background:#fefefe"></div>
<div class="r" style="left:128.30px;top:223.00px;width:895.70px;height:1.00px;background:#e2e2e2"></div>
<svg class="r" style="left:132.40px;top:208.85px;width:5.90px;height:7.50px;" viewBox="0 0 6 8" preserveAspectRatio="none"><path fill="#64a03a" d="M0 0 H4.4 L6 1.6 V8 H0 Z"/><path fill="#fff" fill-opacity="0.6" d="M1.1 1.0 H1.9 V3.0 H1.1 Z M2.7 1.0 H3.5 V3.0 H2.7 Z M2.5 4.0 H3.5 V7.3 H2.5 Z M1.9 4.6 H4.1 V5.2 H1.9 Z M1.9 6.2 H4.1 V6.8 H1.9Z"/></svg>
<div class="t" style="left:140.75px;top:213.83px;color:rgb(38,44,120);transform:scaleY(1.12);transform-origin:0 2.67px;">FA2112-0007</div>
<svg class="r" style="left:188.00px;top:209.60px;width:7.70px;height:7.70px;" viewBox="0 0 8 8" preserveAspectRatio="none"><path fill="#9a9a9a" d="M3 0 H5 V3.5 H6.8 L4 6.3 L1.2 3.5 H3 Z M0 6 H2 L4 7.2 L6 6 H8 V8 H0 Z"/></svg>
<div class="t" style="left:92.30px;width:300px;text-align:center;top:214.83px;color:#333;transform:scaleY(1.12);transform-origin:0 2.67px;">20.12.2021</div>
<div class="t" style="left:296.10px;top:214.83px;color:#333;transform:scaleY(1.12);transform-origin:0 2.67px;">21.12.2021</div>
<svg class="r" style="left:336.10px;top:209.20px;width:8.30px;height:8.10px;" viewBox="0 0 8 8" preserveAspectRatio="none"><path fill="#c9a02a" stroke="#c9a02a" stroke-width="1" stroke-linejoin="round" d="M4 0.6 L7.5 7.5 H0.5 Z"/><path fill="#fff" d="M3.5 2.8 H4.5 L4.35 5.6 H3.65 Z"/><rect x="3.55" y="6.1" width="0.9" height="0.9" fill="#fff"/></svg>
<svg class="r" style="left:365.70px;top:209.20px;width:6.00px;height:7.90px;" viewBox="0 0 6 8" preserveAspectRatio="none"><path fill="#6a5fb5" d="M0 0 H6 V8 H0 Z"/><path fill="#c9c4f0" d="M1.1 0.9 H2.4 V5.4 H1.1 Z M3.6 0.9 H4.9 V5.4 H3.6 Z"/><path fill="#6a5fb5" d="M1 2.3 H5 V2.8 H1 Z M1 3.8 H5 V4.3 H1 Z"/><path fill="#fff" d="M2.5 6.1 H3.5 V8 H2.5 Z"/></svg>
<div class="t" style="left:374.50px;top:214.83px;color:rgb(38,44,120);transform:scaleY(1.12);transform-origin:0 2.67px;">Firma 1</div>
<div class="t" style="left:481.60px;top:214.83px;color:#333;transform:scaleY(1.12);transform-origin:0 2.67px;">22419</div>
<div class="t" style="left:262.20px;width:300px;text-align:right;top:214.83px;color:rgb(34,128,120);transform:scaleY(1.12);transform-origin:0 2.67px;">865,00</div>
<div class="t" style="left:313.30px;width:300px;text-align:right;top:214.83px;color:rgb(34,128,120);transform:scaleY(1.12);transform-origin:0 2.67px;">1.029,35</div>
<svg class="r" style="left:622.90px;top:207.90px;width:8.90px;height:10.50px;" viewBox="0 0 9 10.5" preserveAspectRatio="none"><ellipse cx="4.5" cy="3.2" rx="2.3" ry="3.1" fill="#636363"/><path fill="#636363" d="M0.3 10.5 Q0 7.2 3.2 6.7 H5.8 Q9 7.2 8.7 10.5 Z"/></svg>
<div class="t" style="left:634.60px;top:214.03px;color:rgb(38,44,120);transform:scaleY(1.12);transform-origin:0 2.67px;">SuperAdmin</div>
<div class="t" style="left:786.90px;width:300px;text-align:center;top:214.83px;color:#333;transform:scaleY(1.12);transform-origin:0 2.67px;">28.01.2022 08:04</div>
<div class="r" style="left:128.30px;top:224.00px;width:895.70px;height:19.00px;background:#f8f8f8"></div>
<div class="r" style="left:128.30px;top:243.00px;width:895.70px;height:1.00px;background:#e2e2e2"></div>
<svg class="r" style="left:132.40px;top:229.05px;width:5.90px;height:7.50px;" viewBox="0 0 6 8" preserveAspectRatio="none"><path fill="#64a03a" d="M0 0 H4.4 L6 1.6 V8 H0 Z"/><path fill="#fff" fill-opacity="0.6" d="M1.1 1.0 H1.9 V3.0 H1.1 Z M2.7 1.0 H3.5 V3.0 H2.7 Z M2.5 4.0 H3.5 V7.3 H2.5 Z M1.9 4.6 H4.1 V5.2 H1.9 Z M1.9 6.2 H4.1 V6.8 H1.9Z"/></svg>
<div class="t" style="left:140.75px;top:233.83px;color:rgb(38,44,120);transform:scaleY(1.12);transform-origin:0 2.67px;">FA2112-0006</div>
<svg class="r" style="left:188.00px;top:229.80px;width:7.70px;height:7.70px;" viewBox="0 0 8 8" preserveAspectRatio="none"><path fill="#9a9a9a" d="M3 0 H5 V3.5 H6.8 L4 6.3 L1.2 3.5 H3 Z M0 6 H2 L4 7.2 L6 6 H8 V8 H0 Z"/></svg>
<div class="t" style="left:92.30px;width:300px;text-align:center;top:234.83px;color:#333;transform:scaleY(1.12);transform-origin:0 2.67px;">19.12.2021</div>
<div class="t" style="left:296.10px;top:234.83px;color:#333;transform:scaleY(1.12);transform-origin:0 2.67px;">20.12.2021</div>
<svg class="r" style="left:336.10px;top:229.40px;width:8.30px;height:8.10px;" viewBox="0 0 8 8" preserveAspectRatio="none"><path fill="#c9a02a" stroke="#c9a02a" stroke-width="1" stroke-linejoin="round" d="M4 0.6 L7.5 7.5 H0.5 Z"/><path fill="#fff" d="M3.5 2.8 H4.5 L4.35 5.6 H3.65 Z"/><rect x="3.55" y="6.1" width="0.9" height="0.9" fill="#fff"/></svg>
<svg class="r" style="left:365.70px;top:229.40px;width:6.00px;height:7.90px;" viewBox="0 0 6 8" preserveAspectRatio="none"><path fill="#6a5fb5" d="M0 0 H6 V8 H0 Z"/><path fill="#c9c4f0" d="M1.1 0.9 H2.4 V5.4 H1.1 Z M3.6 0.9 H4.9 V5.4 H3.6 Z"/><path fill="#6a5fb5" d="M1 2.3 H5 V2.8 H1 Z M1 3.8 H5 V4.3 H1 Z"/><path fill="#fff" d="M2.5 6.1 H3.5 V8 H2.5 Z"/></svg>
<div class="t" style="left:374.50px;top:234.83px;color:rgb(38,44,120);transform:scaleY(1.12);transform-origin:0 2.67px;">Firma 2</div>
<div class="t" style="left:481.60px;top:234.83px;color:#333;transform:scaleY(1.12);transform-origin:0 2.67px;">22419</div>
<div class="t" style="left:262.20px;width:300px;text-align:right;top:234.83px;color:rgb(34,128,120);transform:scaleY(1.12);transform-origin:0 2.67px;">991,00</div>
<div class="t" style="left:313.30px;width:300px;text-align:right;top:234.83px;color:rgb(34,128,120);transform:scaleY(1.12);transform-origin:0 2.67px;">1.179,29</div>
<svg class="r" style="left:622.90px;top:228.10px;width:8.90px;height:10.50px;" viewBox="0 0 9 10.5" preserveAspectRatio="none"><ellipse cx="4.5" cy="3.2" rx="2.3" ry="3.1" fill="#636363"/><path fill="#636363" d="M0.3 10.5 Q0 7.2 3.2 6.7 H5.8 Q9 7.2 8.7 10.5 Z"/></svg>
<div class="t" style="left:634.60px;top:234.03px;color:rgb(38,44,120);transform:scaleY(1.12);transform-origin:0 2.67px;">SuperAdmin</div>
<div class="t" style="left:786.90px;width:300px;text-align:center;top:234.83px;color:#333;transform:scaleY(1.12);transform-origin:0 2.67px;">28.01.2022 08:04</div>
<div class="r" style="left:128.30px;top:244.00px;width:895.70px;height:19.00px;background:#fefefe"></div>
<div class="r" style="left:128.30px;top:263.00px;width:895.70px;height:1.00px;background:#e2e2e2"></div>
<svg class="r" style="left:132.40px;top:249.25px;width:5.90px;height:7.50px;" viewBox="0 0 6 8" preserveAspectRatio="none"><path fill="#64a03a" d="M0 0 H4.4 L6 1.6 V8 H0 Z"/><path fill="#fff" fill-opacity="0.6" d="M1.1 1.0 H1.9 V3.0 H1.1 Z M2.7 1.0 H3.5 V3.0 H2.7 Z M2.5 4.0 H3.5 V7.3 H2.5 Z M1.9 4.6 H4.1 V5.2 H1.9 Z M1.9 6.2 H4.1 V6.8 H1.9Z"/></svg>
<div class="t" style="left:140.75px;top:253.83px;color:rgb(38,44,120);transform:scaleY(1.12);transform-origin:0 2.67px;">FA2112-0005</div>
<svg class="r" style="left:188.00px;top:250.00px;width:7.70px;height:7.70px;" viewBox="0 0 8 8" preserveAspectRatio="none"><path fill="#9a9a9a" d="M3 0 H5 V3.5 H6.8 L4 6.3 L1.2 3.5 H3 Z M0 6 H2 L4 7.2 L6 6 H8 V8 H0 Z"/></svg>
<div class="t" style="left:92.30px;width:300px;text-align:center;top:254.83px;color:#333;transform:scaleY(1.12);transform-origin:0 2.67px;">16.12.2021</div>
<div class="t" style="left:170.30px;width:300px;text-align:center;top:254.83px;color:#333;transform:scaleY(1.12);transform-origin:0 2.67px;">17.12.2021</div>
<svg class="r" style="left:365.70px;top:249.60px;width:6.00px;height:7.90px;" viewBox="0 0 6 8" preserveAspectRatio="none"><path fill="#6a5fb5" d="M0 0 H6 V8 H0 Z"/><path fill="#c9c4f0" d="M1.1 0.9 H2.4 V5.4 H1.1 Z M3.6 0.9 H4.9 V5.4 H3.6 Z"/><path fill="#6a5fb5" d="M1 2.3 H5 V2.8 H1 Z M1 3.8 H5 V4.3 H1 Z"/><path fill="#fff" d="M2.5 6.1 H3.5 V8 H2.5 Z"/></svg>
<div class="t" style="left:374.50px;top:254.83px;color:rgb(38,44,120);transform:scaleY(1.12);transform-origin:0 2.67px;">Firma 10</div>
<div class="t" style="left:481.60px;top:254.83px;color:#333;transform:scaleY(1.12);transform-origin:0 2.67px;">31688</div>
<div class="t" style="left:262.20px;width:300px;text-align:right;top:254.83px;color:rgb(34,128,120);transform:scaleY(1.12);transform-origin:0 2.67px;">200,00</div>
<div class="t" style="left:313.30px;width:300px;text-align:right;top:254.83px;color:rgb(34,128,120);transform:scaleY(1.12);transform-origin:0 2.67px;">238,00</div>
<svg class="r" style="left:622.90px;top:248.30px;width:8.90px;height:10.50px;" viewBox="0 0 9 10.5" preserveAspectRatio="none"><ellipse cx="4.5" cy="3.2" rx="2.3" ry="3.1" fill="#636363"/><path fill="#636363" d="M0.3 10.5 Q0 7.2 3.2 6.7 H5.8 Q9 7.2 8.7 10.5 Z"/></svg>
<div class="t" style="left:634.60px;top:254.03px;color:rgb(38,44,120);transform:scaleY(1.12);transform-origin:0 2.67px;">SuperAdmin</div>
<div class="t" style="left:563.30px;width:300px;text-align:center;top:254.83px;color:#333;transform:scaleY(1.12);transform-origin:0 2.67px;">26.01.2022</div>
<div class="r" style="left:128.30px;top:264.00px;width:895.70px;height:20.00px;background:#f8f8f8"></div>
<div class="r" style="left:128.30px;top:284.00px;width:895.70px;height:1.00px;background:#e2e2e2"></div>
<svg class="r" style="left:132.40px;top:269.45px;width:5.90px;height:7.50px;" viewBox="0 0 6 8" preserveAspectRatio="none"><path fill="#64a03a" d="M0 0 H4.4 L6 1.6 V8 H0 Z"/><path fill="#fff" fill-opacity="0.6" d="M1.1 1.0 H1.9 V3.0 H1.1 Z M2.7 1.0 H3.5 V3.0 H2.7 Z M2.5 4.0 H3.5 V7.3 H2.5 Z M1.9 4.6 H4.1 V5.2 H1.9 Z M1.9 6.2 H4.1 V6.8 H1.9Z"/></svg>
<div class="t" style="left:140.75px;top:273.83px;color:rgb(38,44,120);transform:scaleY(1.12);transform-origin:0 2.67px;">FA2112-0004</div>
<svg class="r" style="left:188.00px;top:270.20px;width:7.70px;height:7.70px;" viewBox="0 0 8 8" preserveAspectRatio="none"><path fill="#9a9a9a" d="M3 0 H5 V3.5 H6.8 L4 6.3 L1.2 3.5 H3 Z M0 6 H2 L4 7.2 L6 6 H8 V8 H0 Z"/></svg>
<div class="t" style="left:92.30px;width:300px;text-align:center;top:274.83px;color:#333;transform:scaleY(1.12);transform-origin:0 2.67px;">09.12.2021</div>
<div class="t" style="left:170.30px;width:300px;text-align:center;top:274.83px;color:#333;transform:scaleY(1.12);transform-origin:0 2.67px;">10.12.2021</div>
<svg class="r" style="left:365.70px;top:269.80px;width:6.00px;height:7.90px;" viewBox="0 0 6 8" preserveAspectRatio="none"><path fill="#6a5fb5" d="M0 0 H6 V8 H0 Z"/><path fill="#c9c4f0" d="M1.1 0.9 H2.4 V5.4 H1.1 Z M3.6 0.9 H4.9 V5.4 H3.6 Z"/><path fill="#6a5fb5" d="M1 2.3 H5 V2.8 H1 Z M1 3.8 H5 V4.3 H1 Z"/><path fill="#fff" d="M2.5 6.1 H3.5 V8 H2.5 Z"/></svg>
<div class="t" style="left:374.50px;top:274.83px;color:rgb(38,44,120);transform:scaleY(1.12);transform-origin:0 2.67px;">Firma 2</div>
<div class="t" style="left:481.60px;top:274.83px;color:#333;transform:scaleY(1.12);transform-origin:0 2.67px;">22419</div>
<div class="t" style="left:262.20px;width:300px;text-align:right;top:274.83px;color:rgb(34,128,120);transform:scaleY(1.12);transform-origin:0 2.67px;">599,00</div>
<div class="t" style="left:313.30px;width:300px;text-align:right;top:274.83px;color:rgb(34,128,120);transform:scaleY(1.12);transform-origin:0 2.67px;">712,81</div>
<svg class="r" style="left:622.90px;top:268.50px;width:8.90px;height:10.50px;" viewBox="0 0 9 10.5" preserveAspectRatio="none"><ellipse cx="4.5" cy="3.2" rx="2.3" ry="3.1" fill="#636363"/><path fill="#636363" d="M0.3 10.5 Q0 7.2 3.2 6.7 H5.8 Q9 7.2 8.7 10.5 Z"/></svg>
<div class="t" style="left:634.60px;top:274.03px;color:rgb(38,44,120);transform:scaleY(1.12);transform-origin:0 2.67px;">SuperAdmin</div>
<div class="t" style="left:786.90px;width:300px;text-align:center;top:274.83px;color:#333;transform:scaleY(1.12);transform-origin:0 2.67px;">28.01.2022 08:04</div>
<div class="r" style="left:128.30px;top:285.00px;width:895.70px;height:19.00px;background:#fefefe"></div>
<div class="r" style="left:128.30px;top:304.00px;width:895.70px;height:1.00px;background:#e2e2e2"></div>
<svg class="r" style="left:132.40px;top:289.65px;width:5.90px;height:7.50px;" viewBox="0 0 6 8" preserveAspectRatio="none"><path fill="#64a03a" d="M0 0 H4.4 L6 1.6 V8 H0 Z"/><path fill="#fff" fill-opacity="0.6" d="M1.1 1.0 H1.9 V3.0 H1.1 Z M2.7 1.0 H3.5 V3.0 H2.7 Z M2.5 4.0 H3.5 V7.3 H2.5 Z M1.9 4.6 H4.1 V5.2 H1.9 Z M1.9 6.2 H4.1 V6.8 H1.9Z"/></svg>
<div class="t" style="left:140.75px;top:293.83px;color:rgb(38,44,120);transform:scaleY(1.12);transform-origin:0 2.67px;">FA2201-0001</div>
<svg class="r" style="left:188.00px;top:290.40px;width:7.70px;height:7.70px;" viewBox="0 0 8 8" preserveAspectRatio="none"><path fill="#9a9a9a" d="M3 0 H5 V3.5 H6.8 L4 6.3 L1.2 3.5 H3 Z M0 6 H2 L4 7.2 L6 6 H8 V8 H0 Z"/></svg>
<div class="t" style="left:92.30px;width:300px;text-align:center;top:294.83px;color:#333;transform:scaleY(1.12);transform-origin:0 2.67px;">02.12.2021</div>
<div class="t" style="left:170.30px;width:300px;text-align:center;top:294.83px;color:#333;transform:scaleY(1.12);transform-origin:0 2.67px;">09.12.2021</div>
<svg class="r" style="left:365.70px;top:290.00px;width:6.00px;height:7.90px;" viewBox="0 0 6 8" preserveAspectRatio="none"><path fill="#6a5fb5" d="M0 0 H6 V8 H0 Z"/><path fill="#c9c4f0" d="M1.1 0.9 H2.4 V5.4 H1.1 Z M3.6 0.9 H4.9 V5.4 H3.6 Z"/><path fill="#6a5fb5" d="M1 2.3 H5 V2.8 H1 Z M1 3.8 H5 V4.3 H1 Z"/><path fill="#fff" d="M2.5 6.1 H3.5 V8 H2.5 Z"/></svg>
<div class="t" style="left:374.50px;top:294.83px;color:rgb(38,44,120);transform:scaleY(1.12);transform-origin:0 2.67px;">Firma 1</div>
<div class="t" style="left:481.60px;top:294.83px;color:#333;transform:scaleY(1.12);transform-origin:0 2.67px;">22419</div>
<div class="t" style="left:262.20px;width:300px;text-align:right;top:294.83px;color:rgb(34,128,120);transform:scaleY(1.12);transform-origin:0 2.67px;">200,00</div>
<div class="t" style="left:313.30px;width:300px;text-align:right;top:294.83px;color:rgb(34,128,120);transform:scaleY(1.12);transform-origin:0 2.67px;">238,00</div>
<svg class="r" style="left:622.90px;top:288.70px;width:8.90px;height:10.50px;" viewBox="0 0 9 10.5" preserveAspectRatio="none"><ellipse cx="4.5" cy="3.2" rx="2.3" ry="3.1" fill="#636363"/><path fill="#636363" d="M0.3 10.5 Q0 7.2 3.2 6.7 H5.8 Q9 7.2 8.7 10.5 Z"/></svg>
<div class="t" style="left:634.60px;top:294.03px;color:rgb(38,44,120);transform:scaleY(1.12);transform-origin:0 2.67px;">SuperAdmin</div>
<div class="t" style="left:563.30px;width:300px;text-align:center;top:294.83px;color:#333;transform:scaleY(1.12);transform-origin:0 2.67px;">15.12.2021</div>
<div class="t" style="left:628.60px;width:300px;text-align:center;top:294.83px;color:#333;transform:scaleY(1.12);transform-origin:0 2.67px;">25.01.2022</div>
<div class="t" style="left:786.90px;width:300px;text-align:center;top:294.83px;color:#333;transform:scaleY(1.12);transform-origin:0 2.67px;">28.01.2022 08:04</div>
<div class="r" style="left:128.30px;top:305.00px;width:895.70px;height:19.00px;background:#f8f8f8"></div>
<div class="r" style="left:128.30px;top:324.00px;width:895.70px;height:1.00px;background:#e2e2e2"></div>
<svg class="r" style="left:132.40px;top:309.85px;width:5.90px;height:7.50px;" viewBox="0 0 6 8" preserveAspectRatio="none"><path fill="#64a03a" d="M0 0 H4.4 L6 1.6 V8 H0 Z"/><path fill="#fff" fill-opacity="0.6" d="M1.1 1.0 H1.9 V3.0 H1.1 Z M2.7 1.0 H3.5 V3.0 H2.7 Z M2.5 4.0 H3.5 V7.3 H2.5 Z M1.9 4.6 H4.1 V5.2 H1.9 Z M1.9 6.2 H4.1 V6.8 H1.9Z"/></svg>
<div class="t" style="left:140.75px;top:314.83px;color:rgb(38,44,120);transform:scaleY(1.12);transform-origin:0 2.67px;">FA2112-0003</div>
<svg class="r" style="left:188.00px;top:310.60px;width:7.70px;height:7.70px;" viewBox="0 0 8 8" preserveAspectRatio="none"><path fill="#9a9a9a" d="M3 0 H5 V3.5 H6.8 L4 6.3 L1.2 3.5 H3 Z M0 6 H2 L4 7.2 L6 6 H8 V8 H0 Z"/></svg>
<div class="t" style="left:92.30px;width:300px;text-align:center;top:315.83px;color:#333;transform:scaleY(1.12);transform-origin:0 2.67px;">01.12.2021</div>
<div class="t" style="left:170.30px;width:300px;text-align:center;top:315.83px;color:#333;transform:scaleY(1.12);transform-origin:0 2.67px;">02.12.2021</div>
<svg class="r" style="left:365.70px;top:310.20px;width:6.00px;height:7.90px;" viewBox="0 0 6 8" preserveAspectRatio="none"><path fill="#6a5fb5" d="M0 0 H6 V8 H0 Z"/><path fill="#c9c4f0" d="M1.1 0.9 H2.4 V5.4 H1.1 Z M3.6 0.9 H4.9 V5.4 H3.6 Z"/><path fill="#6a5fb5" d="M1 2.3 H5 V2.8 H1 Z M1 3.8 H5 V4.3 H1 Z"/><path fill="#fff" d="M2.5 6.1 H3.5 V8 H2.5 Z"/></svg>
<div class="t" style="left:374.50px;top:315.83px;color:rgb(38,44,120);transform:scaleY(1.12);transform-origin:0 2.67px;">Firma 2</div>
<div class="t" style="left:481.60px;top:315.83px;color:#333;transform:scaleY(1.12);transform-origin:0 2.67px;">22419</div>
<div class="t" style="left:262.20px;width:300px;text-align:right;top:315.83px;color:rgb(34,128,120);transform:scaleY(1.12);transform-origin:0 2.67px;">392,00</div>
<div class="t" style="left:313.30px;width:300px;text-align:right;top:315.83px;color:rgb(34,128,120);transform:scaleY(1.12);transform-origin:0 2.67px;">466,48</div>
<svg class="r" style="left:622.90px;top:308.90px;width:8.90px;height:10.50px;" viewBox="0 0 9 10.5" preserveAspectRatio="none"><ellipse cx="4.5" cy="3.2" rx="2.3" ry="3.1" fill="#636363"/><path fill="#636363" d="M0.3 10.5 Q0 7.2 3.2 6.7 H5.8 Q9 7.2 8.7 10.5 Z"/></svg>
<div class="t" style="left:634.60px;top:315.03px;color:rgb(38,44,120);transform:scaleY(1.12);transform-origin:0 2.67px;">SuperAdmin</div>
<div class="t" style="left:786.90px;width:300px;text-align:center;top:315.83px;color:#333;transform:scaleY(1.12);transform-origin:0 2.67px;">28.01.2022 08:04</div>
<div class="r" style="left:128.30px;top:325.00px;width:895.70px;height:19.00px;background:#fff"></div>
<div class="r" style="left:128.30px;top:344.00px;width:895.70px;height:1.00px;background:#e0e0e0"></div>
<div class="t" style="left:132.90px;top:334.83px;color:#999;transform:scaleY(1.12);transform-origin:0 2.67px;">Gesamt</div>
<div class="t" style="left:262.20px;width:300px;text-align:right;top:334.83px;color:#999;transform:scaleY(1.12);transform-origin:0 2.67px;">5.703,00</div>
<div class="t" style="left:313.30px;width:300px;text-align:right;top:334.83px;color:#999;transform:scaleY(1.12);transform-origin:0 2.67px;">6.786,57</div>
</body></html>
